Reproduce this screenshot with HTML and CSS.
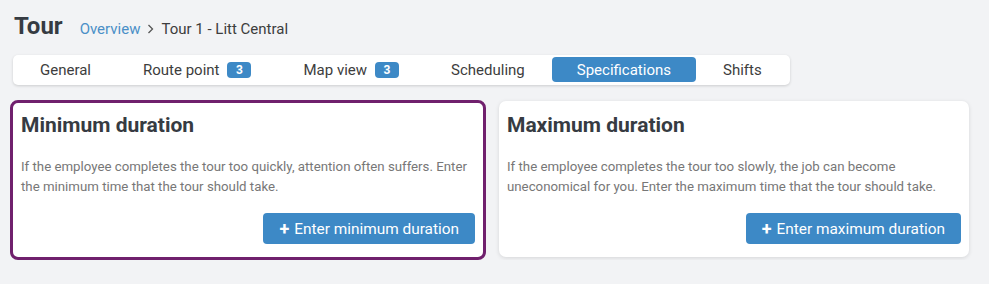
FILE: index.html
```html
<!DOCTYPE html>
<html>
<head>
<meta charset="utf-8">
<link rel="stylesheet" href="styles.css">
</head>
<body>
<div class="page">
  <div class="header">
    <h1 class="title">Tour</h1>
    <nav class="crumbs">
      <a class="crumb-link">Overview</a>
      <svg class="chev" width="7" height="10" viewBox="0 0 7 10"><path d="M1.5 1 L5.5 5 L1.5 9" fill="none" stroke="#555" stroke-width="1.3"/></svg>
      <span class="crumb-current">Tour 1 - Litt Central</span>
    </nav>
  </div>
  <div class="tabbar">
    <div class="tab">General</div>
    <div class="tab">Route point <span class="badge">3</span></div>
    <div class="tab">Map view <span class="badge">3</span></div>
    <div class="tab">Scheduling</div>
    <div class="tab active">Specifications</div>
    <div class="tab">Shifts</div>
  </div>
  <div class="cards">
    <div class="card selected">
      <h2 class="card-title">Minimum duration</h2>
      <p class="card-text">If the employee completes the tour too quickly, attention often suffers. Enter the minimum time that the tour should take.</p>
      <div class="card-actions"><button class="btn"><span class="plus">+</span>Enter minimum duration</button></div>
    </div>
    <div class="card">
      <h2 class="card-title">Maximum duration</h2>
      <p class="card-text">If the employee completes the tour too slowly, the job can become uneconomical for you. Enter the maximum time that the tour should take.</p>
      <div class="card-actions"><button class="btn"><span class="plus">+</span>Enter maximum duration</button></div>
    </div>
  </div>
</div>
</body>
</html>
```
FILE: styles.css
```css
html, body {
  margin: 0;
  padding: 0;
  background: #f2f3f5;
  font-family: Roboto, "Liberation Sans", sans-serif;
  color: #3d3d3d;
}
.page {
  padding: 12px 0 0 0;
}
.header {
  display: flex;
  align-items: baseline;
  padding-left: 14px;
  height: 28px;
}
.title {
  margin: 0;
  font-size: 24px;
  line-height: 28px;
  font-weight: 700;
  color: #363b42;
}
.crumbs {
  margin-left: 17px;
  display: flex;
  align-items: baseline;
  font-size: 15px;
}
.crumb-link {
  color: #4a8fc7;
}
.chev {
  margin: 0 7px 0 7px;
}
.crumb-current {
  color: #3d3d3d;
}
.tabbar {
  display: inline-flex;
  margin: 15px 0 0 13px;
  padding: 2px 3px 3px 2px;
  gap: 2px;
  background: #fff;
  border-radius: 5px;
  box-shadow: 0 1px 3px rgba(0,0,0,0.16);
}
.tab {
  display: flex;
  align-items: center;
  height: 25px;
  padding: 0 25px;
  font-size: 15px;
  color: #3d3d3d;
  border-radius: 4px;
  white-space: nowrap;
}
.tab.active {
  background: #3d89c6;
  color: #fff;
}
.badge {
  display: inline-flex;
  align-items: center;
  justify-content: center;
  margin-left: 8px;
  width: 24px;
  height: 16px;
  border-radius: 4px;
  background: #3d89c6;
  color: #fff;
  font-size: 12px;
  font-weight: 700;
}
.cards {
  display: grid;
  grid-template-columns: 476px 470px;
  column-gap: 13px;
  align-items: start;
  margin: 15px 0 0 10px;
}
.card {
  box-sizing: border-box;
  background: #fff;
  border-radius: 7px;
  padding: 12px 8px 13px 8px;
  box-shadow: 0 1px 4px rgba(0,0,0,0.12);
  margin-top: 1px;
}
.card.selected {
  margin-top: 0;
  border: 3px solid #70206d;
  border-radius: 8px;
  padding: 10px 8px 13px 8px;
  box-shadow: none;
}
.card-title {
  margin: 0;
  font-size: 21px;
  line-height: 24px;
  font-weight: 700;
  color: #363b42;
}
.card-text {
  margin: 20px 0 0 0;
  font-size: 13.25px;
  line-height: 20px;
  color: #777;
}
.card-actions {
  display: flex;
  justify-content: flex-end;
  margin-top: 16px;
}
.btn {
  height: 31px;
  padding: 0 16px 0 16px;
  border: none;
  border-radius: 4px;
  background: #3d89c6;
  color: #fff;
  font-family: Roboto, "Liberation Sans", sans-serif;
  font-size: 15.4px;
  display: inline-flex;
  align-items: center;
}
.plus {
  font-weight: 700;
  font-size: 18px;
  margin-right: 5px;
}
```
